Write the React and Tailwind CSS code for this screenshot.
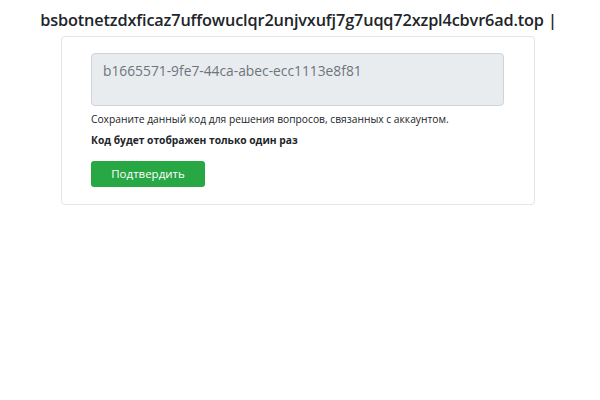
import React from 'react';

export default function App() {
  return (
    <div className="min-h-screen bg-white text-[#212529]" style={{ fontFamily: '"Open Sans", "Noto Sans", sans-serif' }}>
      <div className="pt-[8px] pr-[3px] text-center">
        <h1 className="text-[16.3px] leading-[24px] font-semibold tracking-[-0.15px]">
          bsbotnetzdxficaz7uffowuclqr2unjvxufj7g7uqq72xzpl4cbvr6ad.top |
        </h1>
      </div>
      <div className="ml-[61px] mt-[4px] w-[474px] border border-[#e3e6e9] rounded-[4px] pl-[29px] pr-[30px] pt-[16px] pb-[17px]">
        <div className="w-[413px] h-[53px] bg-[#e9ecef] border border-[#ced4da] rounded-[4px] px-[11px] pt-[7px] text-[13.8px] leading-[20px] text-[#6c757d]">
          b1665571-9fe7-44ca-abec-ecc1113e8f81
        </div>
        <p className="mt-[5px] text-[10.25px] leading-[16px]">
          Сохраните данный код для решения вопросов, связанных с аккаунтом.
        </p>
        <p className="mt-[5px] text-[10.25px] leading-[16px] font-bold">
          Код будет отображен только один раз
        </p>
        <button className="mt-[13px] w-[114px] h-[26px] bg-[#28a745] text-white text-[11.5px] rounded-[3px]">
          Подтвердить
        </button>
      </div>
    </div>
  );
}
